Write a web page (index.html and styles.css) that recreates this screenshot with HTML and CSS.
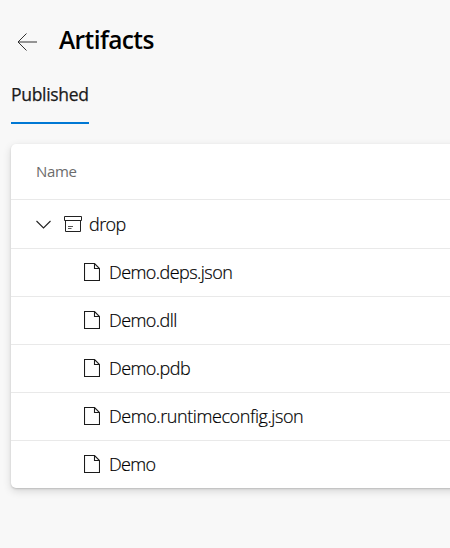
FILE: index.html
```html
<!DOCTYPE html>
<html lang="en">
<head>
<meta charset="utf-8">
<title>Artifacts</title>
<link rel="stylesheet" href="styles.css">
</head>
<body>
<svg class="symbols" aria-hidden="true">
  <symbol id="file" viewBox="0 0 16 18">
    <path d="M.5.5H10.5L15.5 5.5V17.5H.5Z M10.5.5V5.5H15.5" fill="none" stroke="currentColor" stroke-width="1.1"/>
  </symbol>
</svg>
<header class="header">
  <svg class="back" viewBox="0 0 20 18"><path d="M9.5.5 1 9l8.500 8.500M1 9H20"/></svg>
  <h1 class="title"><span>Artifacts</span></h1>
</header>
<nav class="tabs"><a class="tab">Published</a></nav>
<main class="card">
  <div class="row head"><span>Name</span></div>
  <div class="row folder">
    <svg class="chevron" viewBox="0 0 15 9"><path d="M.5 1l7 7 7-7"/></svg>
    <svg class="box" viewBox="0 0 18 16"><path d="M.5.500H17.500V4.500H.5ZM1.500 4.500V15.500H16.500V4.500"/><path class="lines" d="M4 10.500H9M4 12.500H7.500"/></svg>
    <span class="name drop">drop</span>
  </div>
  <div class="row item"><svg class="file"><use href="#file"/></svg><span class="name deps">Demo.deps.json</span></div>
  <div class="row item"><svg class="file"><use href="#file"/></svg><span class="name dll">Demo.dll</span></div>
  <div class="row item"><svg class="file"><use href="#file"/></svg><span class="name pdb">Demo.pdb</span></div>
  <div class="row item"><svg class="file"><use href="#file"/></svg><span class="name config">Demo.runtimeconfig.json</span></div>
  <div class="row item"><svg class="file"><use href="#file"/></svg><span class="name demo">Demo</span></div>
</main>
</body>
</html>
```
FILE: styles.css
```css
* { box-sizing: border-box; }
body {
  margin: 0;
  height: 548px;
  overflow: hidden;
  background: #f8f8f8;
  color: #1b1b1b;
  font-family: "Segoe UI", "Open Sans", "Noto Sans", sans-serif;
}
svg { display: block; flex: none; fill: none; stroke: currentColor; }
.symbols { display: none; }
.header { display: flex; height: 80px; padding-left: 17px; }
.back { width: 20px; height: 18px; margin-top: 33px; color: #333; }
.title {
  margin: 23px 0 0 22px;
  font-size: 24.5px;
  line-height: 34px;
  font-weight: 600;
  letter-spacing: -0.6px;
  color: #000;
}
.tabs { display: flex; height: 44px; padding-left: 11px; }
.tab {
  width: 78px;
  height: 44px;
  border-bottom: 2px solid #0078d4;
  font-size: 17.500px;
  line-height: 29px;
  font-weight: 500;
  letter-spacing: -0.3px;
  -webkit-text-stroke: 0.25px currentColor;
  white-space: nowrap;
}
.card {
  margin: 20px -20px 0 11px;
  height: 344px;
  background: #fff;
  border-radius: 5px;
  box-shadow: 0 3px 8px rgba(0, 0, 0, .14), 0 1px 2px rgba(0, 0, 0, .16);
}
.row { display: flex; align-items: center; height: 48px; border-bottom: 1px solid #e9e9e9; }
.row:last-child { border-bottom: 0; }
.head { height: 56px; padding: 0 0 2px 25px; font-size: 15px; letter-spacing: -0.3px; color: #6c6c6c; }
.folder { height: 49px; padding-left: 25px; }
.chevron { width: 15px; height: 9px; color: #222; stroke-width: 1.1; }
.box { width: 18px; height: 16px; margin: 0 7px 0 13px; color: #222; }
.lines { stroke: #555; }
.item { padding: 0 0 1px 73px; }
.item:last-child { padding-bottom: 2px; }
.file { width: 16px; height: 18px; margin-right: 9px; }
.name {
  font-size: 18px;
  line-height: 24px;
  font-weight: 300;
  letter-spacing: -0.55px;
  color: #000;
  -webkit-text-stroke: 0.2px currentColor;
  white-space: nowrap;
}
.config { letter-spacing: -0.42px; }
.demo { letter-spacing: -0.7px; }
```
